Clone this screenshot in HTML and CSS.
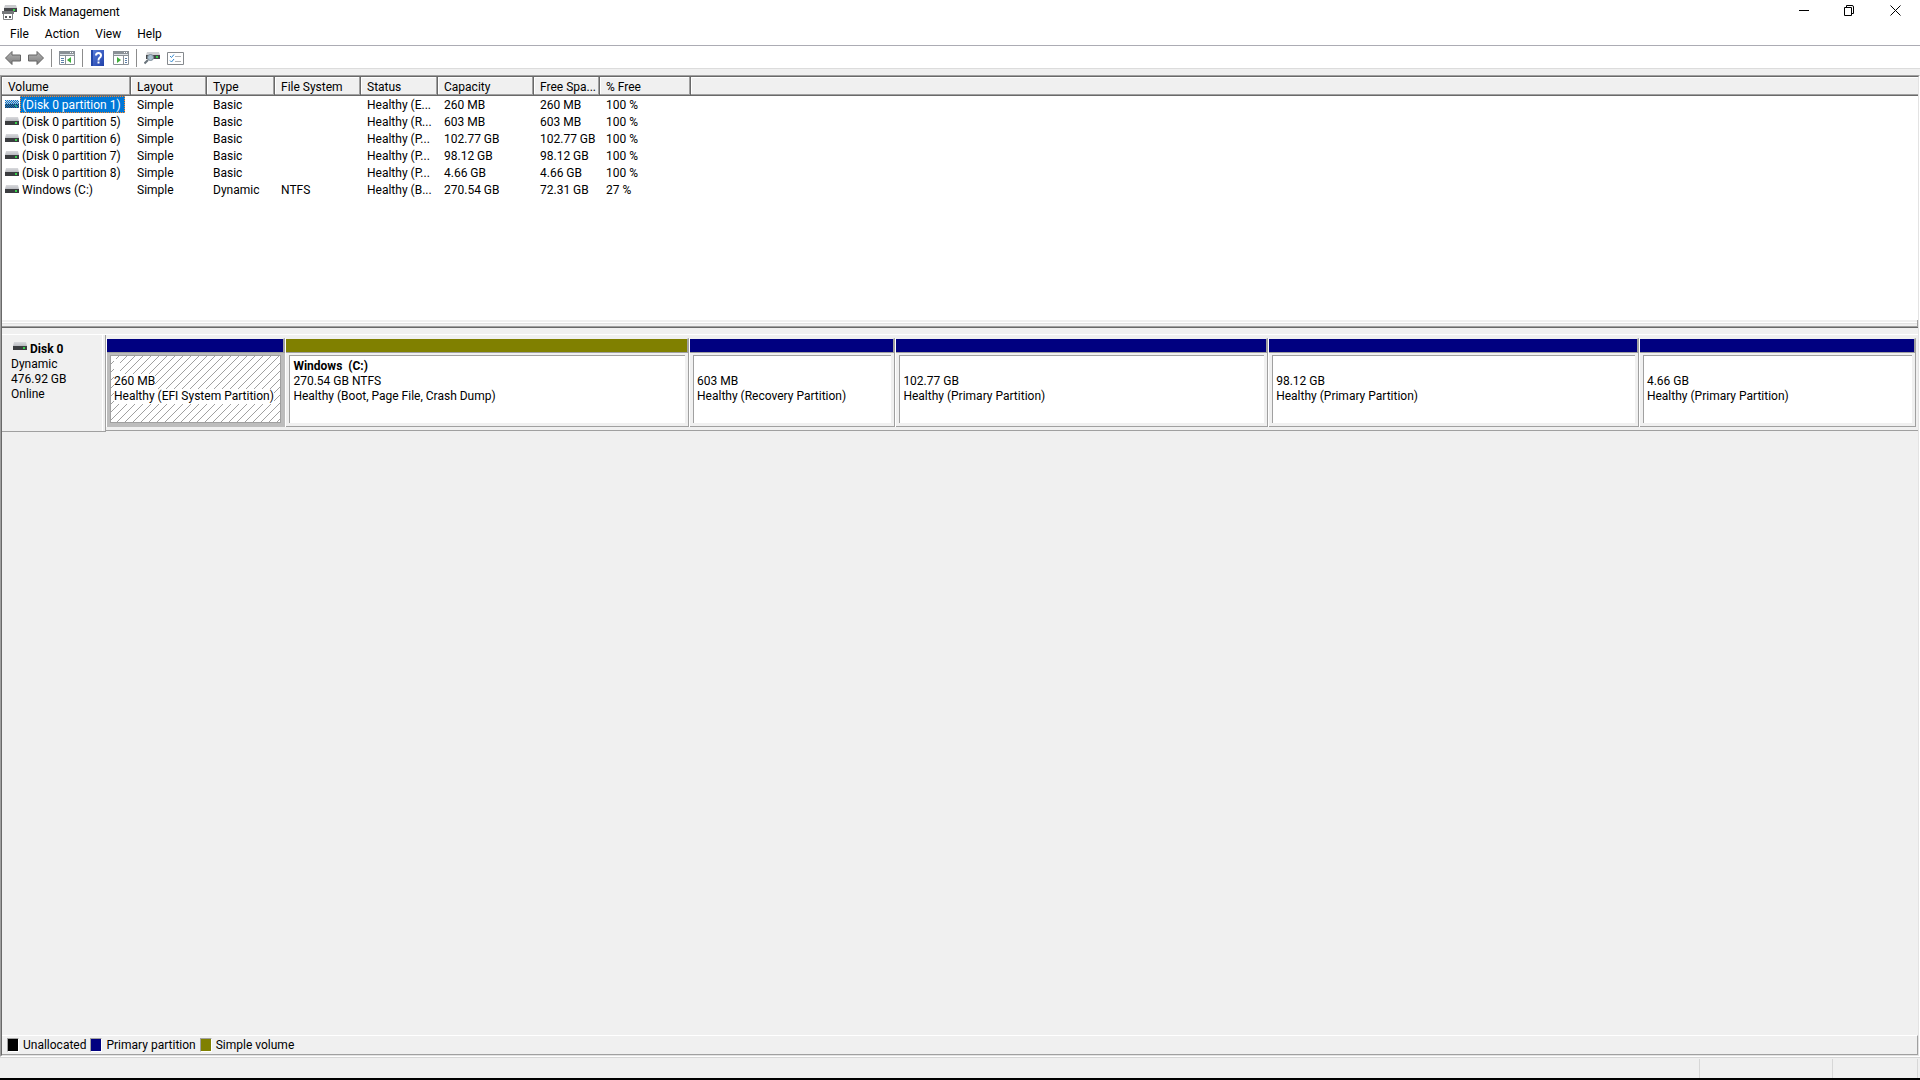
FILE: index.html
```
<!DOCTYPE html>
<html lang="en">
<head>
    <meta charset="UTF-8">
    <meta name="viewport" content="width=device-width, initial-scale=1.0">
    <title>Disk Management</title>
    <link rel="stylesheet" href="styles.css">
</head>
<body>
    <svg class="defs" width="0" height="0" aria-hidden="true">
        <linearGradient id="lid" x1="0" y1="0" x2="0" y2="1">
            <stop offset="0" stop-color="#d9dadd"/>
            <stop offset="1" stop-color="#b9bbc0"/>
        </linearGradient>
        <linearGradient id="arrow-fill" x1="0" y1="0" x2="0" y2="1">
            <stop offset="0" stop-color="#b4b4b4"/>
            <stop offset="1" stop-color="#7c7c7c"/>
        </linearGradient>
        <linearGradient id="help-fill" x1="0" y1="0" x2="1" y2="1">
            <stop offset="0" stop-color="#5b80dd"/>
            <stop offset="1" stop-color="#1f3fa8"/>
        </linearGradient>
        <pattern id="dither" width="2" height="2" patternUnits="userSpaceOnUse">
            <path d="M0 0h1v1H0zM1 1h1v1H1z" fill="#0078d7"/>
        </pattern>
        <symbol id="drive" viewBox="0 0 14 8">
            <path d="M1 0h12l1 4H0z" fill="url(#lid)"/>
            <path d="M0 4h14v4H0z" fill="#3b3d40"/>
            <path d="M10 5h2v2h-2z" fill="#35d04a"/>
        </symbol>
    </svg>

    <header class="titlebar">
        <svg class="app-icon" width="16" height="16" viewBox="0 0 16 16" aria-hidden="true">
            <path d="M3 1h11l1 3H2z" fill="#c9cacd"/>
            <path d="M2 4h13v4H2z" fill="#45474a"/>
            <path d="M11 5h2v2h-2z" fill="#38cf4c"/>
            <path d="M1.5 9.500h9v6h-9z" fill="#fff" stroke="#808285"/>
            <path d="M0 7h12v3H0z" fill="#77797c"/>
            <path d="M3 12h2v2H3zM7 12h2v2H7z" fill="#55575a"/>
        </svg>
        <h1>Disk Management</h1>
        <div class="window-buttons">
            <button aria-label="Minimize"><svg width="11" height="11" viewBox="0 0 11 11"><path d="M1 5.500h10" stroke="#000" fill="none"/></svg></button>
            <button aria-label="Restore"><svg width="11" height="11" viewBox="0 0 11 11"><path d="M.5 2.500h7v8h-7zM2.500 2V.5H8Q9.500 .5 9.500 2v6.500H8" stroke="#000" fill="none"/></svg></button>
            <button aria-label="Close"><svg width="11" height="11" viewBox="0 0 11 11"><path d="M.5.5l10 10M10.500.5l-10 10" stroke="#000" fill="none"/></svg></button>
        </div>
    </header>

    <nav class="menubar">
        <button>File</button>
        <button>Action</button>
        <button>View</button>
        <button>Help</button>
    </nav>

    <div class="toolbar">
        <button aria-label="Back"><svg width="16" height="16" viewBox="0 0 16 16"><path d="M.5 8L7 1.500V5h8.500v6H7v3.500z" fill="url(#arrow-fill)" stroke="#656565"/></svg></button>
        <button aria-label="Forward"><svg width="16" height="16" viewBox="0 0 16 16"><path d="M15.500 8L9 1.500V5H.5v6H9v3.500z" fill="url(#arrow-fill)" stroke="#656565"/></svg></button>
        <span class="separator"></span>
        <button aria-label="Show/Hide Console Tree"><svg width="16" height="14" viewBox="0 0 16 14"><path d="M.5.5h15v13H.5z" fill="#fff" stroke="#8a9096"/><path d="M0 0h16v5H0z" fill="#8a9096"/><path d="M1 3h14v1H1z" fill="#dfe3e6"/><path d="M11 1h1v1h-1zM13 1h1v1h-1z" fill="#fff"/><path d="M6 5h1v9H6z" fill="#8a9096"/><path d="M2 7.500h3M2 9.500h3M2 11.500h3" stroke="#5c7fa8" fill="none"/><path d="M12 6v6L8 9z" fill="#3fae3a"/></svg></button>
        <span class="separator"></span>
        <button aria-label="Help topics"><svg width="16" height="16" viewBox="0 0 16 16"><path d="M1 0h13v16H1z" fill="url(#help-fill)"/><path d="M1 0h2v16H1z" fill="#2346a8"/><path d="M6 5.500Q6 3 8.500 3T11 5.500Q11 7 9.500 7.800 8.500 8.500 8.500 10.500" stroke="#fff" stroke-width="2" fill="none"/><path d="M7.500 11.500h2v2h-2z" fill="#fff"/></svg></button>
        <button aria-label="Show/Hide Action Pane"><svg width="16" height="14" viewBox="0 0 16 14"><path d="M.5.5h15v13H.5z" fill="#fff" stroke="#8a9096"/><path d="M0 0h16v5H0z" fill="#8a9096"/><path d="M1 3h14v1H1z" fill="#dfe3e6"/><path d="M11 1h1v1h-1zM13 1h1v1h-1z" fill="#fff"/><path d="M10 5h1v9h-1z" fill="#8a9096"/><path d="M12 7.500h2M12 9.500h2M12 11.500h2" stroke="#5c7fa8" fill="none"/><path d="M4 6v6l4-3z" fill="#3fae3a"/></svg></button>
        <span class="separator"></span>
        <button aria-label="Rescan Disks"><svg width="16" height="14" viewBox="0 0 16 14"><path d="M3 1h12l1 3H2z" fill="#cfd1d4"/><path d="M2 4h14v4H2z" fill="#46484b"/><path d="M12 5h2v2h-2z" fill="#35d04a"/><circle cx="6.500" cy="6.500" r="3" fill="#a9c0d0" stroke="#7c8a96"/><path d="M4 9L.5 12.500" stroke="#6a747c" stroke-width="2"/></svg></button>
        <button aria-label="Properties"><svg width="17" height="13" viewBox="0 0 17 13"><path d="M.5.5h16v12H.5z" fill="#fff" stroke="#85898d"/><path d="M3 4l1.500 1.500L7 2.500M3 8.500L4.500 10 7 7" stroke="#2f87d0" fill="none"/><path d="M8 4.500h6M8 9.500h6" stroke="#b0b3b6"/></svg></button>
    </div>

    <main class="frame">
        <div class="panes">
            <section class="volume-list">
                <table>
                    <colgroup>
                        <col class="col-volume">
                        <col class="col-layout">
                        <col class="col-type">
                        <col class="col-fs">
                        <col class="col-status">
                        <col class="col-capacity">
                        <col class="col-free">
                        <col class="col-percent">
                        <col>
                    </colgroup>
                    <thead>
                        <tr><th>Volume</th><th>Layout</th><th>Type</th><th>File System</th><th>Status</th><th>Capacity</th><th>Free Spa...</th><th>% Free</th><th></th></tr>
                    </thead>
                    <tbody>
                        <tr class="selected"><td><svg class="drive" width="14" height="8"><use href="#drive"/><rect width="14" height="8" fill="url(#dither)"/></svg><span>(Disk 0 partition 1)</span></td><td>Simple</td><td>Basic</td><td></td><td>Healthy (E...</td><td>260 MB</td><td>260 MB</td><td>100 %</td><td></td></tr>
                        <tr><td><svg class="drive" width="14" height="8"><use href="#drive"/></svg><span>(Disk 0 partition 5)</span></td><td>Simple</td><td>Basic</td><td></td><td>Healthy (R...</td><td>603 MB</td><td>603 MB</td><td>100 %</td><td></td></tr>
                        <tr><td><svg class="drive" width="14" height="8"><use href="#drive"/></svg><span>(Disk 0 partition 6)</span></td><td>Simple</td><td>Basic</td><td></td><td>Healthy (P...</td><td>102.77 GB</td><td>102.77 GB</td><td>100 %</td><td></td></tr>
                        <tr><td><svg class="drive" width="14" height="8"><use href="#drive"/></svg><span>(Disk 0 partition 7)</span></td><td>Simple</td><td>Basic</td><td></td><td>Healthy (P...</td><td>98.12 GB</td><td>98.12 GB</td><td>100 %</td><td></td></tr>
                        <tr><td><svg class="drive" width="14" height="8"><use href="#drive"/></svg><span>(Disk 0 partition 8)</span></td><td>Simple</td><td>Basic</td><td></td><td>Healthy (P...</td><td>4.66 GB</td><td>4.66 GB</td><td>100 %</td><td></td></tr>
                        <tr><td><svg class="drive" width="14" height="8"><use href="#drive"/></svg><span>Windows (C:)</span></td><td>Simple</td><td>Dynamic</td><td>NTFS</td><td>Healthy (B...</td><td>270.54 GB</td><td>72.31 GB</td><td>27 %</td><td></td></tr>
                    </tbody>
                </table>
            </section>

            <div class="splitter"></div>

            <section class="disk-view">
                <div class="disk">
                    <div class="disk-label">
                        <h2><svg class="drive" width="14" height="8"><use href="#drive"/></svg>Disk 0</h2>
                        <p>Dynamic</p>
                        <p>476.92 GB</p>
                        <p>Online</p>
                    </div>
                    <div class="partitions">
                        <div class="partition selected" style="flex-grow: 179">
                            <div class="bar"></div>
                            <div class="body"><div class="info"><b>&nbsp;&nbsp;</b><span>260 MB</span><span>Healthy (EFI System Partition)</span></div></div>
                        </div>
                        <div class="partition simple" style="flex-grow: 404">
                            <div class="bar"></div>
                            <div class="body"><div class="info"><b>Windows&nbsp; (C:)</b><span>270.54 GB NTFS</span><span>Healthy (Boot, Page File, Crash Dump)</span></div></div>
                        </div>
                        <div class="partition" style="flex-grow: 206">
                            <div class="bar"></div>
                            <div class="body"><div class="info"><b>&nbsp;</b><span>603 MB</span><span>Healthy (Recovery Partition)</span></div></div>
                        </div>
                        <div class="partition" style="flex-grow: 373">
                            <div class="bar"></div>
                            <div class="body"><div class="info"><b>&nbsp;</b><span>102.77 GB</span><span>Healthy (Primary Partition)</span></div></div>
                        </div>
                        <div class="partition" style="flex-grow: 371">
                            <div class="bar"></div>
                            <div class="body"><div class="info"><b>&nbsp;</b><span>98.12 GB</span><span>Healthy (Primary Partition)</span></div></div>
                        </div>
                        <div class="partition" style="flex-grow: 277">
                            <div class="bar"></div>
                            <div class="body"><div class="info"><b>&nbsp;</b><span>4.66 GB</span><span>Healthy (Primary Partition)</span></div></div>
                        </div>
                    </div>
                </div>
            </section>

            <ul class="legend">
                <li><i class="swatch unallocated"></i>Unallocated</li>
                <li><i class="swatch primary"></i>Primary partition</li>
                <li><i class="swatch simple-volume"></i>Simple volume</li>
            </ul>
        </div>
    </main>

    <footer class="statusbar">
        <span></span>
        <span></span>
        <span></span>
    </footer>
</body>
</html>
```
FILE: styles.css
```
* {
    box-sizing: border-box;
}

body {
    display: flex;
    flex-direction: column;
    min-height: 100vh;
    margin: 0;
    background: #f0f0f0;
    border-bottom: 2px solid #000;
    color: #000;
    font: 12px/15px Roboto, sans-serif;
}

button {
    padding: 0;
    border: none;
    background: none;
    color: inherit;
    font: inherit;
}

svg {
    display: block;
    flex: none;
}

.defs {
    position: absolute;
}

h1, h2, p, ul {
    margin: 0;
    padding: 0;
    font-size: 12px;
}

/* title bar */
.titlebar {
    display: flex;
    align-items: center;
    height: 24px;
    padding-left: 2px;
    background: #fff;
}

.titlebar h1 {
    padding-left: 5px;
    font-weight: normal;
}

.window-buttons {
    display: flex;
    align-self: flex-start;
    margin-left: auto;
    padding-top: 2px;
}

.window-buttons button {
    display: flex;
    justify-content: center;
    align-items: center;
    width: 46px;
    height: 16px;
    padding-right: 3px;
}

/* menu and toolbar */
.menubar {
    display: flex;
    height: 22px;
    padding-left: 2px;
    background: #fff;
    border-bottom: 1px solid #acacb4;
}

.menubar button {
    padding: 0 8px;
}

.toolbar {
    display: flex;
    align-items: center;
    height: 23px;
    padding: 2px 0 0 5px;
    background: #fff;
    border-bottom: 1px solid #dcdcdc;
    gap: 7px;
}

.separator {
    width: 1px;
    height: 18px;
    background: #8c8c8c;
}

/* sunken frame around both panes */
.frame {
    display: flex;
    flex: 1;
    margin-top: 6px;
    border: 1px solid;
    border-color: #a0a0a0 #fff #fff #a0a0a0;
}

.panes {
    display: flex;
    flex: 1;
    flex-direction: column;
    min-width: 0;
    border: 1px solid;
    border-color: #696969 #e3e3e3 #e3e3e3 #696969;
}

/* volume list */
.volume-list {
    height: 243px;
    background: #fff;
}

table {
    width: 100%;
    table-layout: fixed;
    border-collapse: collapse;
}

.col-volume { width: 129px; }
.col-layout { width: 76px; }
.col-type { width: 68px; }
.col-fs { width: 86px; }
.col-status { width: 77px; }
.col-capacity { width: 96px; }
.col-free { width: 66px; }
.col-percent { width: 91px; }

th, td {
    height: 17px;
    padding: 2px 0 0 6px;
    font-weight: normal;
    text-align: left;
    white-space: nowrap;
}

th {
    height: 19px;
    background: #f0f0f0;
    box-shadow: inset -1px -1px #696969, inset -2px -2px #a0a0a0, inset 1px 1px #fff;
}

th:last-child {
    box-shadow: inset 0 -1px #696969, inset 0 -2px #a0a0a0, inset 1px 1px #fff;
}

td:first-child {
    display: flex;
    align-items: flex-start;
    padding: 0 0 0 3px;
}

td .drive {
    margin-top: 4px;
}

td:first-child span {
    display: block;
    height: 17px;
    margin-left: 1px;
    padding: 2px 4px 0 2px;
}

.volume-list .selected span {
    background: #0078d7;
    color: #fff;
    outline: 1px dotted #ff8728;
    outline-offset: -1px;
}

.splitter {
    height: 8px;
    background: #f0f0f0;
    border-bottom: 1px solid #696969;
    box-shadow: inset 0 -1px #a0a0a0, inset -1px 0 #a0a0a0, inset 0 2px #f0f0f0, inset 0 3px #fff, inset 0 4px #e3e3e3;
}

/* graphical view */
.disk-view {
    flex: 1;
    padding-top: 6px;
}

.disk {
    display: flex;
    align-items: flex-start;
    border-top: 1px solid #fff;
}

.disk-label {
    width: 104px;
    height: 97px;
    padding: 7px 0 0 9px;
    border-right: 1px solid #a0a0a0;
    border-bottom: 1px solid #a0a0a0;
    box-shadow: inset -2px 0 #f0f0f0, inset -3px 0 #fff;
}

.disk-label h2 {
    display: flex;
    padding-left: 2px;
    gap: 3px;
}

.partitions {
    display: flex;
    flex: 1;
    height: 96px;
    padding: 3px 2px 3px 0;
    border-bottom: 1px solid #a0a0a0;
}

.partition {
    display: flex;
    flex: 1 1 0;
    flex-direction: column;
    min-width: 0;
    border-left: 1px solid #fff;
}

.bar {
    height: 15px;
    background: #000080;
    border-top: 1px solid #f0f0f0;
    border-right: 2px solid #a0a0a0;
    border-bottom: 1px solid #a0a0a0;
}

.simple .bar {
    background: #808000;
}

.body {
    display: flex;
    flex: 1;
    padding: 2px 3px 3px;
    border-right: 1px solid #a0a0a0;
    border-bottom: 1px solid #a0a0a0;
}

.info {
    flex: 1;
    min-width: 0;
    padding: 3px 0 0 3px;
    background: #fff;
    border-top: 1px solid #a0a0a0;
    border-left: 1px solid #a0a0a0;
    white-space: nowrap;
}

.info b, .info span {
    display: block;
    width: fit-content;
}

.partition.selected .body {
    background: #bdbdbd;
    border-color: #bdbdbd;
}

.partition.selected .info {
    border: 1px solid #a0a0a0;
    background: linear-gradient(135deg, #fff 46%, #a0a0a0 46%, #a0a0a0 54%, #fff 54%) 0 0 / 8px 8px;
}

.partition.selected b, .partition.selected span {
    background: #fff;
}

/* legend */
.legend {
    display: flex;
    align-items: center;
    height: 20px;
    padding-left: 5px;
    border-top: 1px solid #fff;
    border-right: 1px solid #a0a0a0;
    border-bottom: 1px solid #a0a0a0;
    gap: 4px;
    list-style: none;
}

.legend li {
    display: flex;
    align-items: center;
    gap: 4px;
}

.swatch {
    width: 12px;
    height: 14px;
    border: 1px solid;
    border-color: #a0a0a0 #fff #fff #a0a0a0;
}

.unallocated { background: #000; }
.primary { background: #000080; }
.simple-volume { background: #808000; }

/* status bar */
.statusbar {
    display: flex;
    height: 21px;
    padding: 1px 2px 0 0;
    border-top: 1px solid #d7d7d7;
}

.statusbar span {
    border-right: 1px solid #d7d7d7;
}

.statusbar span:nth-child(1) {
    flex: 1;
}

.statusbar span:nth-child(2) {
    width: 133px;
}

.statusbar span:nth-child(3) {
    width: 85px;
}
```
